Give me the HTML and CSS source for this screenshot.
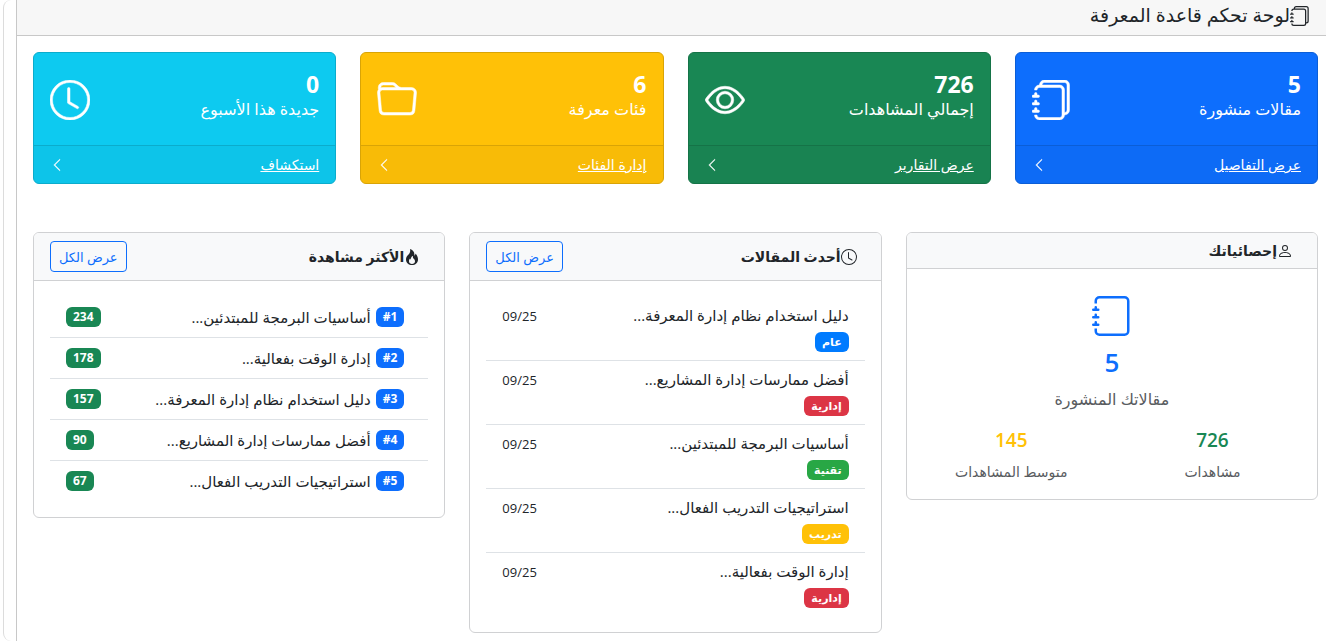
FILE: index.html
```html
<!DOCTYPE html>
<html lang="ar" dir="rtl">
<head>
<meta charset="utf-8">
<title>لوحة تحكم قاعدة المعرفة</title>
<link rel="stylesheet" href="styles.css">
</head>
<body>
<svg class="sprite" aria-hidden="true">
  <symbol id="journals" viewBox="0 0 16 16"><path d="M5 0h8a2 2 0 0 1 2 2v10a2 2 0 0 1-2 2 2 2 0 0 1-2 2H3a2 2 0 0 1-2-2h1a1 1 0 0 0 1 1h8a1 1 0 0 0 1-1V4a1 1 0 0 0-1-1H3a1 1 0 0 0-1 1H1a2 2 0 0 1 2-2h8a2 2 0 0 1 2 2v9a1 1 0 0 0 1-1V2a1 1 0 0 0-1-1H5a1 1 0 0 0-1 1H3a2 2 0 0 1 2-2"/><path d="M1 6v-.5a.5.5 0 0 1 1 0V6h.5a.5.5 0 0 1 0 1h-2a.5.5 0 0 1 0-1zm0 3v-.5a.5.5 0 0 1 1 0V9h.5a.5.5 0 0 1 0 1h-2a.5.5 0 0 1 0-1zm0 2.5v.5H.5a.5.5 0 0 0 0 1h2a.5.5 0 0 0 0-1H2v-.5a.5.5 0 0 0-1 0"/></symbol>
  <symbol id="journal" viewBox="0 0 16 16"><path d="M3 0h10a2 2 0 0 1 2 2v12a2 2 0 0 1-2 2H3a2 2 0 0 1-2-2v-1h1v1a1 1 0 0 0 1 1h10a1 1 0 0 0 1-1V2a1 1 0 0 0-1-1H3a1 1 0 0 0-1 1v1H1V2a2 2 0 0 1 2-2"/><path d="M1 5v-.5a.5.5 0 0 1 1 0V5h.5a.5.5 0 0 1 0 1h-2a.5.5 0 0 1 0-1zm0 3v-.5a.5.5 0 0 1 1 0V8h.5a.5.5 0 0 1 0 1h-2a.5.5 0 0 1 0-1zm0 3v-.5a.5.5 0 0 1 1 0v.5h.5a.5.5 0 0 1 0 1h-2a.5.5 0 0 1 0-1z"/></symbol>
  <symbol id="eye" viewBox="0 0 16 16"><path d="M16 8s-3-5.5-8-5.5S0 8 0 8s3 5.5 8 5.5S16 8 16 8M1.173 8a13 13 0 0 1 1.66-2.043C4.12 4.668 5.88 3.5 8 3.5s3.879 1.168 5.168 2.457A13 13 0 0 1 14.828 8q-.086.13-.195.288c-.335.48-.83 1.12-1.465 1.755C11.879 11.332 10.119 12.5 8 12.5s-3.879-1.168-5.168-2.457A13 13 0 0 1 1.172 8z"/><path d="M8 5.500a2.500 2.500 0 1 0 0 5 2.500 2.500 0 0 0 0-5M4.500 8a3.500 3.500 0 1 1 7 0 3.500 3.500 0 0 1-7 0"/></symbol>
  <symbol id="folder" viewBox="0 0 16 16"><path d="M.54 3.870.500 3a2 2 0 0 1 2-2h3.672a2 2 0 0 1 1.414.586l.828.828A2 2 0 0 0 9.828 3h3.982a2 2 0 0 1 1.992 2.181l-.637 7A2 2 0 0 1 13.174 14H2.826a2 2 0 0 1-1.991-1.819l-.637-7a2 2 0 0 1 .342-1.310zM2.190 4a1 1 0 0 0-.996 1.090l.637 7a1 1 0 0 0 .995.910h10.348a1 1 0 0 0 .995-.910l.637-7A1 1 0 0 0 13.810 4zm4.690-1.707A1 1 0 0 0 6.172 2H2.500a1 1 0 0 0-1 .981l.006.139q.323-.119.684-.120h5.396z"/></symbol>
  <symbol id="clock" viewBox="0 0 16 16"><path d="M8 3.500a.5.5 0 0 0-1 0V9a.5.5 0 0 0 .252.434l3.500 2a.5.5 0 0 0 .496-.868L8 8.710z"/><path d="M8 16A8 8 0 1 0 8 0a8 8 0 0 0 0 16m7-8A7 7 0 1 1 1 8a7 7 0 0 1 14 0"/></symbol>
  <symbol id="chevron" viewBox="0 0 16 16"><path d="M11.354 1.646a.5.5 0 0 1 0 .708L5.707 8l5.647 5.646a.5.5 0 0 1-.708.708l-6-6a.5.5 0 0 1 0-.708l6-6a.5.5 0 0 1 .708 0"/></symbol>
  <symbol id="fire" viewBox="0 0 16 16"><path d="M8 16c3.314 0 6-2 6-5.500 0-1.500-.5-4-2.500-6 .25 1.500-1.250 2-1.250 2C11 4 9 .5 6 0c.357 2 .5 4-2 6-1.250 1-2 2.729-2 4.500C2 14 4.686 16 8 16m0-1c-1.657 0-3-1-3-2.750 0-.75.25-2 1.250-3C6.125 10 7 10.500 7 10.500c-.375-1.250.5-3.250 2-3.500-.179 1-.25 2 1 3 .625.5 1 1.364 1 2.250C11 14 9.657 15 8 15"/></symbol>
  <symbol id="person" viewBox="0 0 16 16"><path d="M8 8a3 3 0 1 0 0-6 3 3 0 0 0 0 6m2-3a2 2 0 1 1-4 0 2 2 0 0 1 4 0m4 8c0 1-1 1-1 1H3s-1 0-1-1 1-4 6-4 6 3 6 4m-1-.004c-.001-.246-.154-.986-.832-1.664C11.516 10.680 10.289 10 8 10s-3.516.68-4.168 1.332c-.678.678-.83 1.418-.832 1.664z"/></symbol>
</svg>
<div class="frame">
  <main class="board">
    <header class="board-header">
      <h1 class="board-title"><svg class="icon icon-title"><use href="#journals"/></svg>لوحة تحكم قاعدة المعرفة</h1>
    </header>
    <div class="board-body">
      <section class="tiles">
        <article class="tile tile-primary">
          <div class="tile-body"><div><p class="tile-number">5</p><p class="tile-label">مقالات منشورة</p></div><svg class="icon icon-large"><use href="#journals"/></svg></div>
          <div class="tile-footer"><a href="#">عرض التفاصيل</a><svg class="icon icon-chevron"><use href="#chevron"/></svg></div>
        </article>
        <article class="tile tile-success">
          <div class="tile-body"><div><p class="tile-number">726</p><p class="tile-label">إجمالي المشاهدات</p></div><svg class="icon icon-large"><use href="#eye"/></svg></div>
          <div class="tile-footer"><a href="#">عرض التقارير</a><svg class="icon icon-chevron"><use href="#chevron"/></svg></div>
        </article>
        <article class="tile tile-warning">
          <div class="tile-body"><div><p class="tile-number">6</p><p class="tile-label">فئات معرفة</p></div><svg class="icon icon-large"><use href="#folder"/></svg></div>
          <div class="tile-footer"><a href="#">إدارة الفئات</a><svg class="icon icon-chevron"><use href="#chevron"/></svg></div>
        </article>
        <article class="tile tile-info">
          <div class="tile-body"><div><p class="tile-number">0</p><p class="tile-label">جديدة هذا الأسبوع</p></div><svg class="icon icon-large"><use href="#clock"/></svg></div>
          <div class="tile-footer"><a href="#">استكشاف</a><svg class="icon icon-chevron"><use href="#chevron"/></svg></div>
        </article>
      </section>
      <section class="panels">
        <article class="panel">
          <header class="panel-header"><h2 class="panel-title"><svg class="icon"><use href="#person"/></svg>إحصائياتك</h2></header>
          <div class="stats">
            <svg class="icon icon-large"><use href="#journal"/></svg>
            <p class="stats-main">5</p>
            <p class="stats-caption">مقالاتك المنشورة</p>
            <div class="stats-row">
              <div><p class="stats-number text-success">726</p><p class="stats-label">مشاهدات</p></div>
              <div><p class="stats-number text-warning">145</p><p class="stats-label">متوسط المشاهدات</p></div>
            </div>
          </div>
        </article>
        <article class="panel">
          <header class="panel-header"><h2 class="panel-title"><svg class="icon"><use href="#clock"/></svg>أحدث المقالات</h2><button type="button" class="button">عرض الكل</button></header>
          <ul class="list">
            <li class="recent"><div><h3 class="recent-title">دليل استخدام نظام إدارة المعرفة...</h3><span class="badge badge-general">عام</span></div><time class="date">09/25</time></li>
            <li class="recent"><div><h3 class="recent-title">أفضل ممارسات إدارة المشاريع...</h3><span class="badge badge-admin">إدارية</span></div><time class="date">09/25</time></li>
            <li class="recent"><div><h3 class="recent-title">أساسيات البرمجة للمبتدئين...</h3><span class="badge badge-tech">تقنية</span></div><time class="date">09/25</time></li>
            <li class="recent"><div><h3 class="recent-title">استراتيجيات التدريب الفعال...</h3><span class="badge badge-training">تدريب</span></div><time class="date">09/25</time></li>
            <li class="recent"><div><h3 class="recent-title">إدارة الوقت بفعالية...</h3><span class="badge badge-admin">إدارية</span></div><time class="date">09/25</time></li>
          </ul>
        </article>
        <article class="panel">
          <header class="panel-header"><h2 class="panel-title"><svg class="icon"><use href="#fire"/></svg>الأكثر مشاهدة</h2><button type="button" class="button">عرض الكل</button></header>
          <ul class="list">
            <li class="ranked"><span class="badge badge-rank">#1</span><span class="ranked-title">أساسيات البرمجة للمبتدئين...</span><span class="badge badge-views">234</span></li>
            <li class="ranked"><span class="badge badge-rank">#2</span><span class="ranked-title">إدارة الوقت بفعالية...</span><span class="badge badge-views">178</span></li>
            <li class="ranked"><span class="badge badge-rank">#3</span><span class="ranked-title">دليل استخدام نظام إدارة المعرفة...</span><span class="badge badge-views">157</span></li>
            <li class="ranked"><span class="badge badge-rank">#4</span><span class="ranked-title">أفضل ممارسات إدارة المشاريع...</span><span class="badge badge-views">90</span></li>
            <li class="ranked"><span class="badge badge-rank">#5</span><span class="ranked-title">استراتيجيات التدريب الفعال...</span><span class="badge badge-views">67</span></li>
          </ul>
        </article>
      </section>
    </div>
  </main>
</div>
</body>
</html>
```
FILE: styles.css
```css
* { box-sizing: border-box; }
body {
  margin: 0;
  background: #fff;
  color: #212529;
  font-family: "Open Sans", "DejaVu Sans", sans-serif;
  font-size: 16px;
  line-height: 24px;
}
h1, h2, h3, p, ul { margin: 0; padding: 0; }
ul { list-style: none; }
.sprite { display: none; }
.icon { width: 16px; height: 16px; flex: none; fill: currentColor; overflow: visible; }
.icon-title { width: 20px; height: 20px; }
.icon-large { width: 40px; height: 40px; stroke: currentColor; stroke-width: 0.2; }
.icon-chevron { width: 14px; height: 14px; stroke: currentColor; stroke-width: 0.5; }

.frame {
  display: flex;
  min-height: 100vh;
  margin-left: 3px;
  padding-left: 12px;
  border-left: 1px solid #dcdcdc;
  border-radius: 8px 0 0 8px;
}
.board { flex: 1; min-width: 0; border-left: 1px solid #c8c8c8; }
.board-header {
  display: flex;
  padding: 0 16px 4px;
  background: #f7f7f7;
  border-bottom: 1px solid #c8c8c8;
}
.board-title { display: flex; align-items: center; font-size: 19px; line-height: 31px; font-weight: 500; }
.board-body { display: grid; gap: 48px; padding: 16px 8px 7px 16px; }

.tiles { display: grid; grid-template-columns: repeat(4, minmax(0, 1fr)); gap: 24px; }
.tile { color: #fff; border: 1px solid; border-radius: 6px; overflow: hidden; }
.tile-primary { background: #0d6efd; border-color: #0b5ed7; }
.tile-success { background: #198754; border-color: #157347; }
.tile-warning { background: #ffc107; border-color: #d9a406; }
.tile-info { background: #0dcaf0; border-color: #0baccc; }
.tile-body { display: flex; align-items: center; justify-content: space-between; padding: 16px 16px 14px; }
.tile-number { font-size: 23px; line-height: 30px; font-weight: 700; }
.tile-label { font-size: 16px; line-height: 20px; padding-bottom: 12px; }
.tile-footer {
  display: flex;
  align-items: center;
  justify-content: space-between;
  padding: 8px 16px;
  border-top: 1px solid;
  border-color: inherit;
  background: rgba(33, 37, 41, 0.03);
  font-size: 14px;
  line-height: 21px;
}
.tile-footer a { color: #fff; text-decoration: underline; }

.panels { display: grid; grid-template-columns: repeat(3, minmax(0, 1fr)); gap: 24px; align-items: start; }
.panel { border: 1px solid #d0d1d3; border-radius: 6px; overflow: hidden; }
.panel-header {
  display: flex;
  align-items: center;
  justify-content: space-between;
  padding: 8px 16px;
  background: #f8f9fa;
  border-bottom: 1px solid #d0d1d3;
}
.panel-title { display: flex; align-items: center; padding-right: 8px; font-size: 14px; line-height: 19px; font-weight: 600; }
.button {
  height: 31px;
  padding: 0 8px;
  border: 1px solid #0d6efd;
  border-radius: 4px;
  background: transparent;
  color: #0d6efd;
  font-family: inherit;
  font-size: 13px;
}

.stats { padding: 27px 16px 17px; text-align: center; }
.stats .icon { display: block; margin: 0 auto; color: #0d6efd; stroke: none; }
.stats-main { padding: 9px 0 10px; color: #0d6efd; font-size: 26px; line-height: 34px; font-weight: 600; }
.stats-caption { color: #595c5f; font-size: 16px; line-height: 20px; }
.stats-row { display: grid; grid-template-columns: 1fr 1fr; gap: 24px; padding-top: 19px; }
.stats-number { font-size: 19px; line-height: 24px; font-weight: 600; }
.text-success { color: #198754; }
.text-warning { color: #ffc107; }
.stats-label { padding-top: 10px; color: #595c5f; font-size: 14px; line-height: 20px; }

.list { padding: 16px; }
.list li { padding: 8px 16px; }
.list li + li { border-top: 1px solid #dee2e6; }
.recent { display: flex; justify-content: space-between; }
.recent-title { font-size: 15px; line-height: 21px; font-weight: 500; padding-bottom: 6px; }
.recent .badge { display: block; width: fit-content; font-size: 11px; }
.date { font-size: 13px; line-height: 22px; }
.badge {
  flex: none;
  padding: 0 7px;
  border-radius: 6px;
  color: #fff;
  font-size: 12px;
  line-height: 20px;
  font-weight: 700;
}
.badge-general { background: #007bff; }
.badge-admin { background: #dc3545; }
.badge-tech { background: #28a745; }
.badge-training { background: #ffc107; }
.badge-rank { margin-right: 8px; background: #0d6efd; }
.badge-views { background: #198754; }
.ranked { display: flex; align-items: center; }
.ranked-title { flex: 1; padding-right: 5px; font-size: 15px; }
```
